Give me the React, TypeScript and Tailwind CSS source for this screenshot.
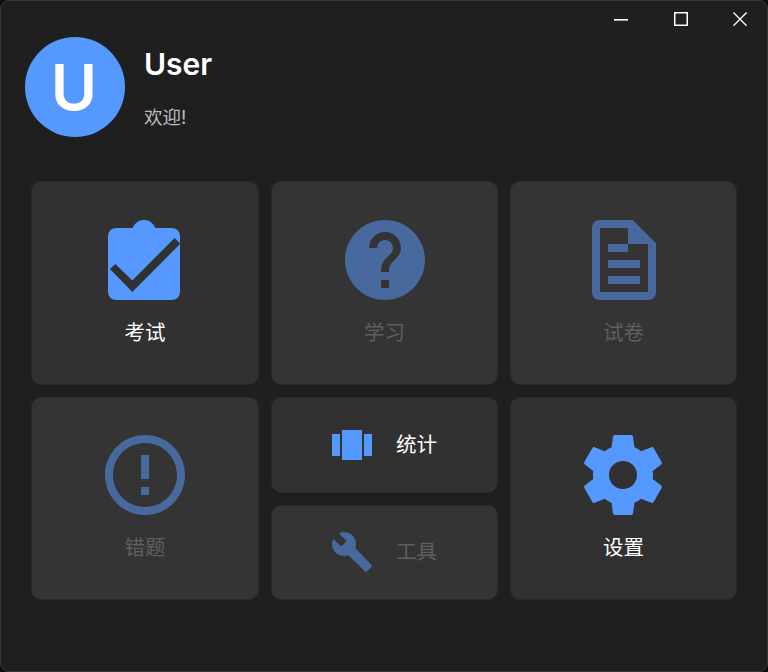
import type { ReactNode } from "react";

const cardBase =
  "rounded-[10px] border border-[#2a2a2a] text-[20.5px] leading-[28px] ";

function Tile({ label, disabled, raised, icon }: { label: string; disabled?: boolean; raised?: boolean; icon: ReactNode }) {
  return (
    <button
      className={
        cardBase +
        "flex h-full w-full flex-col items-center " +
        (raised ? "pt-[36px] " : "pt-[37px] ") +
        (disabled ? "bg-[#343434] text-[#5f5f5f]" : "bg-[#313131] text-white")
      }
    >
      <span className={"flex h-[82px] items-center " + (disabled ? "text-[#47699d]" : "text-[#5599ff]")}>{icon}</span>
      <span className="mt-[18px]">{label}</span>
    </button>
  );
}

function WideTile({ label, disabled, icon }: { label: string; disabled?: boolean; icon: ReactNode }) {
  return (
    <button
      className={
        cardBase +
        "flex min-h-0 w-full items-center gap-[24px] pl-[60px] " +
        (disabled ? "h-[95px] bg-[#343434] pb-[2px] text-[#5f5f5f]" : "h-[96px] bg-[#313131] text-white")
      }
    >
      <span className={disabled ? "text-[#47699d]" : "text-[#5599ff]"}>{icon}</span>
      <span>{label}</span>
    </button>
  );
}

const ExamIcon = () => (
  <svg className="mr-[2px] h-[80px] w-[72px]" viewBox="3 1 18 20" fill="currentColor">
    <path
      fillRule="evenodd"
      d="M19 3h-4.18C14.4 1.84 13.3 1 12 1s-2.4.84-2.82 2H5c-1.1 0-2 .9-2 2v14c0 1.1.9 2 2 2h14c1.1 0 2-.9 2-2V7l-11.92 12-5.58-5.75L4.83 12l4.25 4.1L19.67 5.5 21 6.9V5c0-1.1-.9-2-2-2z"
    />
  </svg>
);

const StudyIcon = () => (
  <svg className="h-[80px] w-[80px]" viewBox="2 2 20 20" fill="currentColor">
    <path d="M12 2C6.48 2 2 6.48 2 12s4.48 10 10 10 10-4.48 10-10S17.52 2 12 2zm1 17h-2v-2h2v2zm2.07-7.75l-.9.92C13.45 12.9 13 13.5 13 15h-2v-.5c0-1.1.45-2.1 1.17-2.83l1.24-1.26c.37-.36.59-.86.59-1.41 0-1.1-.9-2-2-2s-2 .9-2 2H8c0-2.21 1.79-4 4-4s4 1.79 4 4c0 .88-.36 1.68-.93 2.25z" />
  </svg>
);

const PaperIcon = () => (
  <svg className="h-[80px] w-[64px]" viewBox="4 2 16 20" fill="currentColor">
    <path
      fillRule="evenodd"
      d="M6 2h8.17L20 7.83V20c0 1.1-.9 2-2 2H6c-1.1 0-2-.9-2-2V4c0-1.1.9-2 2-2zm0 2v16h12V8h-5V4H6z"
    />
    <path d="M8 8h5v2H8zM8 12h8v2H8zM8 16h8v2H8z" />
  </svg>
);

const MistakeIcon = () => (
  <svg className="h-[80px] w-[80px]" viewBox="2 2 20 20" fill="currentColor">
    <path d="M11 15h2v2h-2zm0-8h2v6h-2zm1-5C6.48 2 2 6.48 2 12s4.48 10 10 10 10-4.48 10-10S17.52 2 12 2zm0 18c-4.42 0-8-3.58-8-8s3.58-8 8-8 8 3.58 8 8-3.58 8-8 8z" />
  </svg>
);

const StatsIcon = () => (
  <svg className="h-[30px] w-[40px]" viewBox="0 0 40 30" fill="currentColor">
    <path d="M0 4h8v22H0zM10 0h20v30H10zM32 4h8v22h-8z" />
  </svg>
);

const ToolIcon = () => (
  <svg className="h-[40px] w-[40px]" viewBox="0 0 40 40" fill="currentColor">
    <path d="M7 1.2C11.5-.9 17-.1 20.6 3.5c3.3 3.3 4.3 8.3 2.7 12.6L40 33.4v.8L34.4 40h-.8L16.4 23.2C12 24.9 6.8 23.8 3.5 20.4-.1 16.8-1 11.4 1.4 6.9L9.3 14.4l5.3-5.2z" />
  </svg>
);

const SettingsIcon = () => (
  <svg className="-ml-[1px] h-[80px] w-[78px]" viewBox="2.25 2 19.5 20" fill="currentColor">
    <path d="M12,15.5A3.5,3.5 0 0,1 8.5,12A3.5,3.5 0 0,1 12,8.5A3.5,3.5 0 0,1 15.5,12A3.5,3.5 0 0,1 12,15.5M19.43,12.97C19.47,12.65 19.5,12.33 19.5,12C19.5,11.67 19.47,11.34 19.43,11L21.54,9.37C21.73,9.22 21.78,8.95 21.66,8.73L19.66,5.27C19.54,5.05 19.27,4.96 19.05,5.05L16.56,6.05C16.04,5.66 15.5,5.32 14.87,5.07L14.5,2.42C14.46,2.18 14.25,2 14,2H10C9.75,2 9.54,2.18 9.5,2.42L9.13,5.07C8.5,5.32 7.96,5.66 7.44,6.05L4.95,5.05C4.73,4.96 4.46,5.05 4.34,5.27L2.34,8.73C2.21,8.95 2.27,9.22 2.46,9.37L4.57,11C4.53,11.34 4.5,11.67 4.5,12C4.5,12.33 4.53,12.65 4.57,12.97L2.46,14.63C2.27,14.78 2.21,15.05 2.34,15.27L4.34,18.73C4.46,18.95 4.73,19.03 4.95,18.95L7.44,17.94C7.96,18.34 8.5,18.68 9.13,18.93L9.5,21.58C9.54,21.82 9.75,22 10,22H14C14.25,22 14.46,21.82 14.5,21.58L14.87,18.93C15.5,18.67 16.04,18.34 16.56,17.94L19.05,18.95C19.27,19.03 19.54,18.95 19.66,18.73L21.66,15.27C21.78,15.05 21.73,14.78 21.54,14.63L19.43,12.97Z" />
  </svg>
);

export default function App() {
  return (
    <div className="h-[672px] w-[768px] overflow-hidden bg-[#0f0f0f] font-['Inter','Noto_Sans_CJK_SC',sans-serif]">
      <div className="flex h-full w-full flex-col rounded-[9px] border border-[#3a3a3a] bg-[#1f1f1f]">
        <div className="flex h-[36px] shrink-0 justify-end gap-[45px] pt-[11px] pr-[19px] text-white">
          <button aria-label="minimize" className="h-[15px] w-[15px]">
            <svg className="block h-[15px] w-[15px]" viewBox="0 0 15 15" fill="currentColor">
              <path d="M1 7h14v1.6h-14z" />
            </svg>
          </button>
          <button aria-label="maximize" className="h-[15px] w-[15px]">
            <svg className="block h-[15px] w-[15px]" viewBox="0 0 15 15" fill="none" stroke="currentColor" strokeWidth="1.5">
              <path d="M1.75 .75h12.5v12.5H1.75z" />
            </svg>
          </button>
          <button aria-label="close" className="h-[15px] w-[15px]">
            <svg className="block h-[15px] w-[15px]" viewBox="0 0 15 15" fill="none" stroke="currentColor" strokeWidth="1.3">
              <path d="M.4 .5l13.2 13.2M13.6 .5l-13.2 13.2" />
            </svg>
          </button>
        </div>
        <header className="flex h-[100px] shrink-0 pl-[24px]">
          <div className="flex h-[100px] w-[100px] items-center justify-center rounded-full bg-[#5599ff] text-[63px] leading-none font-semibold text-white">
            <span className="-ml-[2px]">U</span>
          </div>
          <div className="ml-[19px] pt-[7px]">
            <h1 className="text-[30px] leading-[40px] font-semibold text-white">User</h1>
            <p className="mt-[19px] text-[18.5px] leading-[28px] text-[#bcbcbc]">欢迎!</p>
          </div>
        </header>
        <main className="mt-[44px] ml-[30px] grid grid-cols-[228px_227px_227px] grid-rows-[204px_203px] gap-[12px]">
          <Tile label="考试" icon={<ExamIcon />} />
          <Tile label="学习" disabled icon={<StudyIcon />} />
          <Tile label="试卷" disabled icon={<PaperIcon />} />
          <Tile label="错题" disabled raised icon={<MistakeIcon />} />
          <div className="flex flex-col gap-[12px]">
            <WideTile label="统计" icon={<StatsIcon />} />
            <WideTile label="工具" disabled icon={<ToolIcon />} />
          </div>
          <Tile label="设置" raised icon={<SettingsIcon />} />
        </main>
      </div>
    </div>
  );
}
